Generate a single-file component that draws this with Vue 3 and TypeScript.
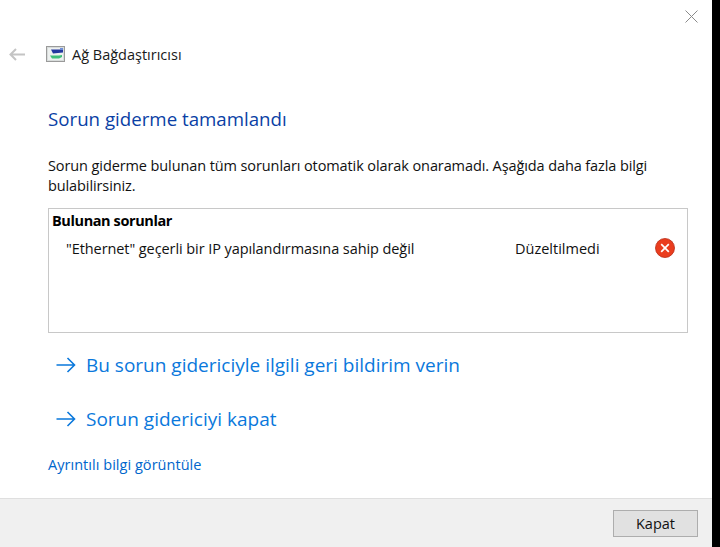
<script setup lang="ts">
const title = 'Sorun giderme tamamlandı'
const links = ['Bu sorun gidericiyle ilgili geri bildirim verin', 'Sorun gidericiyi kapat']
</script>

<template>
  <div class="screen">
    <div class="window">
      <div class="titlebar">
        <svg class="close" width="13" height="13" viewBox="0 0 13 13"><path d="M.5.5l12 12M12.5.5l-12 12" stroke="#8a8a8a" fill="none" /></svg>
      </div>
      <div class="nav">
        <svg class="back" width="17" height="13" viewBox="0 0 17 13"><path d="M16 6.5H1.5M7 1L1.5 6.5 7 12" stroke="#c4c4c4" stroke-width="2" fill="none" /></svg>
        <svg class="app" width="19" height="16" viewBox="0 0 19 16">
          <rect x=".5" y=".5" width="18" height="15" fill="#d8dcdb" stroke="#9a9a9a" />
          <rect x="2" y="2" width="15" height="12" fill="#eef1f0" />
          <path d="M5 3.5H17V6.5L7 7.5Z" fill="#22379f" />
          <path d="M14 2h3v2h-3z" fill="#6f8ed8" />
          <path d="M4 9.5h9L16 9v2l-3 1.5H6Z" fill="#3fbf7a" />
        </svg>
        <span class="nav-title">Ağ Bağdaştırıcısı</span>
      </div>
      <main class="content">
        <h1>{{ title }}</h1>
        <p class="desc">Sorun giderme bulunan tüm sorunları otomatik olarak onaramadı. Aşağıda daha fazla bilgi bulabilirsiniz.</p>
        <section class="box">
          <h2>Bulunan sorunlar</h2>
          <div class="row">
            <span class="issue">"Ethernet" geçerli bir IP yapılandırmasına sahip değil</span>
            <span class="status">Düzeltilmedi</span>
            <svg class="err" width="20" height="20" viewBox="0 0 20 20">
              <circle cx="10" cy="10" r="9.5" fill="#ea3d1e" stroke="#b92a14" stroke-width=".8" />
              <path d="M6.2 6.2l7.6 7.6M13.8 6.2l-7.6 7.6" stroke="#fff" stroke-width="1.7" />
            </svg>
          </div>
        </section>
        <a v-for="l in links" :key="l" class="cmd">
          <svg width="20" height="16" viewBox="0 0 20 16"><path d="M.5 8h18M11.5 1l7 7-7 7" stroke="#0a78dc" stroke-width="1.6" fill="none" /></svg>
          <span>{{ l }}</span>
        </a>
        <a class="details">Ayrıntılı bilgi görüntüle</a>
      </main>
      <footer class="footer">
        <button class="btn" type="button">Kapat</button>
      </footer>
    </div>
  </div>
</template>

<style>
html, body { margin: 0; background: #000; }
</style>

<style scoped>
.screen { width: 720px; height: 547px; background: #000; overflow: hidden; font-family: "Open Sans", "Noto Sans", sans-serif; }
.window { width: 712px; height: 547px; background: #fff; display: flex; flex-direction: column; }
.titlebar { height: 39px; display: flex; justify-content: flex-end; padding: 10px 14px 0 0; box-sizing: border-box; flex: none; }
.nav { height: 30px; display: flex; align-items: center; padding-left: 9px; flex: none; }
.back { margin-right: 20px; }
.app { margin-right: 7px; }
.nav-title { font-size: 14.5px; color: #1a1a1a; }
.content { flex: 1; padding: 0 24px 0 48px; display: flex; flex-direction: column; align-items: flex-start; min-height: 0; }
h1 { margin: 37px 0 0; font-size: 18.7px; font-weight: 400; line-height: 26px; color: #0a3fa5; }
.desc { margin: 24px 0 0; font-size: 14.5px; line-height: 20px; color: #111; letter-spacing: -.1px; width: 640px; }
.box { box-sizing: border-box; width: 640px; height: 125px; margin-top: 12px; border: 1px solid #c8c8c8; padding: 2px 12px 0 3px; }
h2 { margin: 0; font-size: 14.5px; font-weight: 700; line-height: 19px; color: #000; letter-spacing: -.4px; }
.row { display: flex; align-items: center; height: 24px; margin-top: 6px; padding-left: 14px; font-size: 14.5px; color: #111; letter-spacing: -.08px; }
.issue { width: 449px; }
.status { width: 140px; letter-spacing: 0; }
.err { flex: none; }
.cmd { display: flex; align-items: center; gap: 10px; margin: 0 0 0 8px; height: 54px; font-size: 19px; color: #0a78dc; }
.cmd:first-of-type { margin-top: 5px; }
.details { margin-top: 9px; font-size: 14.5px; line-height: 20px; color: #0066cc; letter-spacing: .04px; }
.footer { height: 49px; flex: none; box-sizing: border-box; border-top: 1px solid #dfdfdf; background: #f0f0f0; display: flex; justify-content: flex-end; align-items: flex-start; padding: 11px 14px 0 0; }
.btn { width: 85px; height: 27px; box-sizing: border-box; border: 1px solid #adadad; background: #e1e1e1; font: inherit; font-size: 14.5px; color: #111; padding: 0; }
</style>
